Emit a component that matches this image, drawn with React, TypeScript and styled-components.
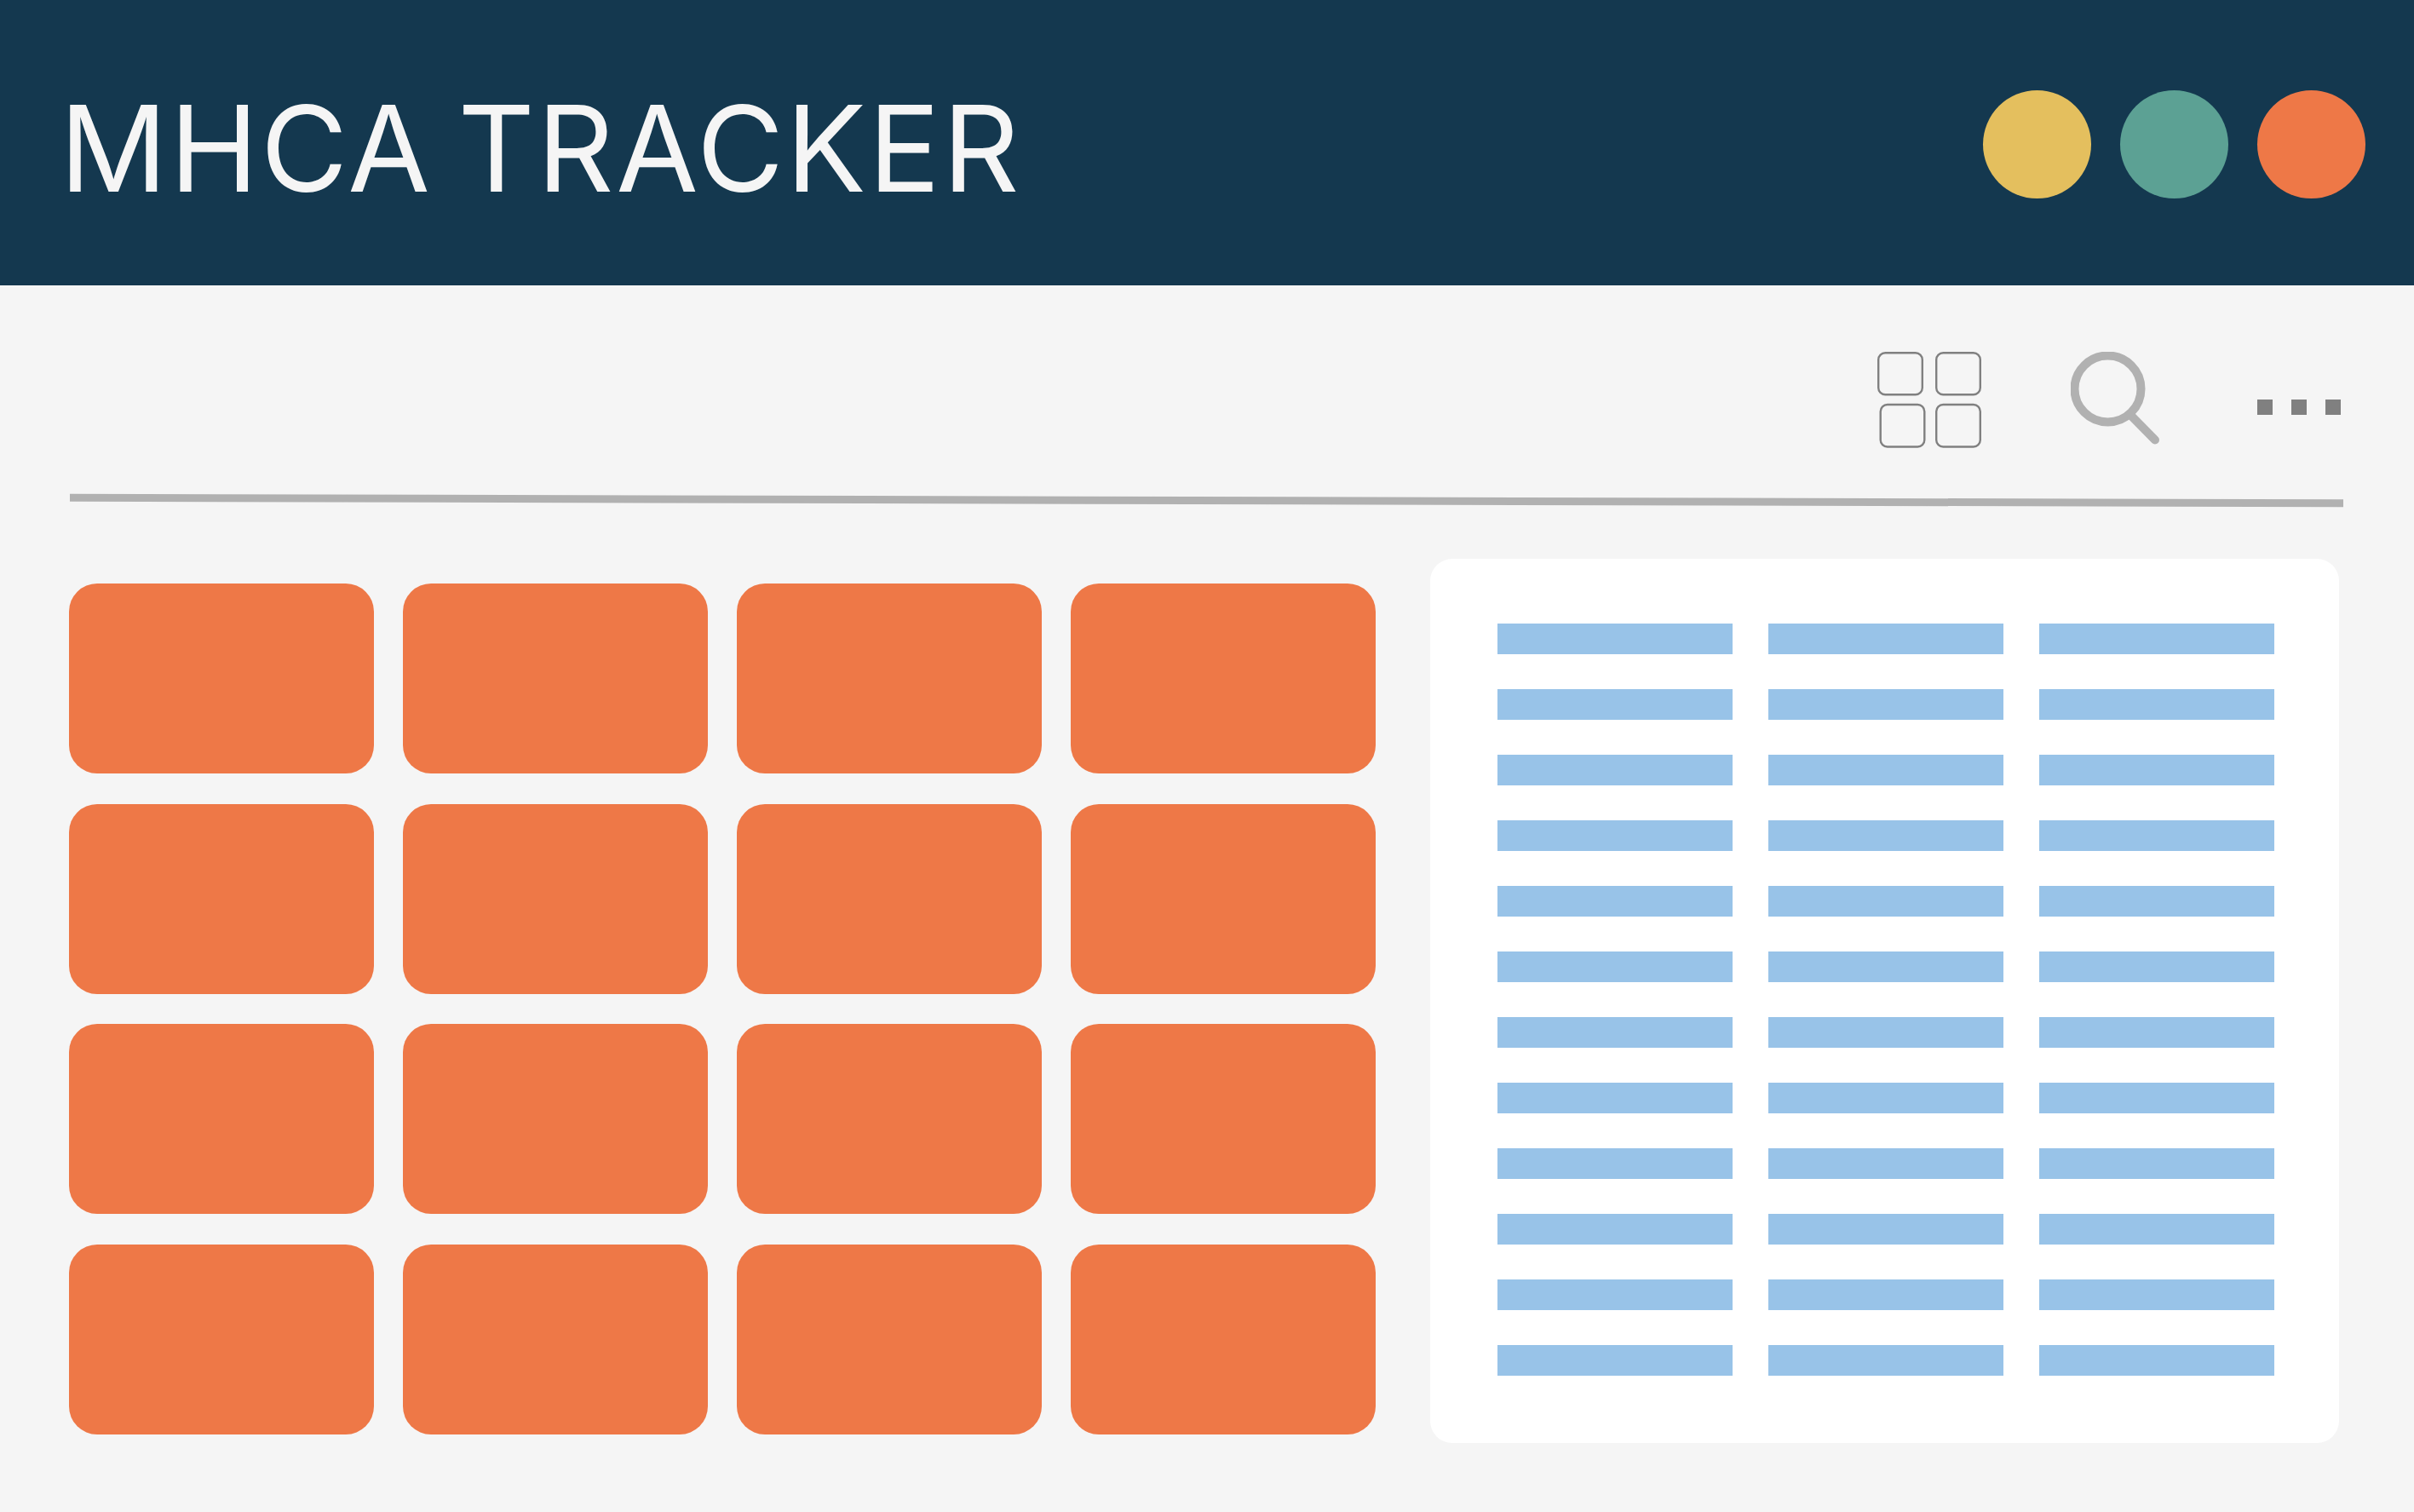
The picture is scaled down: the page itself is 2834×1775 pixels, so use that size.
import React from 'react';
import styled, { createGlobalStyle } from 'styled-components';

const theme = {
  navy: '#14384f',
  page: '#f5f5f5',
  orange: '#ee7847',
  yellow: '#e4bf5e',
  teal: '#5ca194',
  blue: '#98c3e8',
  rule: '#b1b1b1',
  icon: '#808080',
};

const GlobalStyle = createGlobalStyle`
  html, body {
    margin: 0;
    padding: 0;
    background: ${theme.page};
  }
`;

const Page = styled.div`
  width: 2834px;
  height: 1775px;
  display: flex;
  flex-direction: column;
  background: ${theme.page};
  overflow: hidden;
`;

const Header = styled.header`
  height: 334.5px;
  flex: none;
  display: flex;
  align-items: flex-start;
  justify-content: space-between;
  padding: 106px 57px 0 70px;
  box-sizing: border-box;
  background: ${theme.navy};
`;

const Title = styled.h1`
  margin: 5px 0 0;
  font-family: 'Inter', 'Liberation Sans', sans-serif;
  font-weight: 400;
  font-size: 140px;
  line-height: 127px;
  letter-spacing: 2.7px;
  word-spacing: -12px;
  color: ${theme.page};
  white-space: nowrap;
`;

const Lights = styled.div`
  display: flex;
  gap: 34px;
`;

const Light = styled.span<{ $color: string }>`
  width: 127px;
  height: 127px;
  border-radius: 50%;
  background: ${(p) => p.$color};
`;

const Toolbar = styled.div`
  display: flex;
  justify-content: flex-end;
  align-items: flex-start;
  padding: 78.5px 86px 0 0;
  height: 248.5px;
  box-sizing: border-box;
  flex: none;
`;

const IconGroup = styled.div`
  display: flex;
  gap: 105px;
`;

const Divider = styled.div`
  flex: none;
  height: 9px;
  margin: 0 83px 0 82px;
  background: ${theme.rule};
  transform: rotate(0.14deg);
`;

const Content = styled.main`
  display: flex;
  align-items: flex-start;
  padding: 64px 0 0 81px;
`;

const CardGrid = styled.div`
  display: grid;
  grid-template-columns: repeat(4, 357.5px);
  grid-auto-rows: 223px;
  column-gap: 34.5px;
  row-gap: 35.5px;
  padding-top: 29px;
`;

const Card = styled.div`
  background: ${theme.orange};
  border-radius: 33px;
`;

const Panel = styled.section`
  width: 1067px;
  height: 1038px;
  box-sizing: border-box;
  margin-left: 64.5px;
  padding: 76px 76px 0 79px;
  background: #fff;
  border-radius: 26px;
  display: grid;
  grid-template-columns: repeat(3, 276px);
  grid-auto-rows: 36px;
  column-gap: 42px;
  row-gap: 41px;
  align-content: start;
`;

const Bar = styled.div`
  background: ${theme.blue};
`;

const GridIcon = () => (
  <svg width="122" height="113" viewBox="0 0 122 113" fill="none" stroke={theme.icon} strokeWidth="2.4">
    <rect x="1.2" y="1.2" width="51.6" height="49" rx="8" />
    <rect x="69.2" y="1.2" width="51.6" height="49" rx="8" />
    <rect x="3.7" y="62" width="51.6" height="49.5" rx="8" />
    <rect x="69.2" y="62" width="51.6" height="49.5" rx="8" />
  </svg>
);

const SearchIcon = () => (
  <svg width="104" height="113" viewBox="0 0 104 113" fill="none" stroke={theme.rule}>
    <circle cx="43.5" cy="43.5" r="39" strokeWidth="10" />
    <path d="M70 74 L99 103.5" strokeWidth="10" strokeLinecap="round" />
  </svg>
);

const DotsIcon = () => (
  <svg width="108" height="113" viewBox="0 0 108 113" fill={theme.icon}>
    <rect x="10" y="56" width="18" height="18" />
    <rect x="50" y="56" width="18" height="18" />
    <rect x="90" y="56" width="18" height="18" />
  </svg>
);

const App: React.FC = () => {
  const cards = Array.from({ length: 16 });
  const bars = Array.from({ length: 36 });

  return (
    <Page>
      <GlobalStyle />
      <Header>
        <Title>MHCA TRACKER</Title>
        <Lights>
          <Light $color={theme.yellow} />
          <Light $color={theme.teal} />
          <Light $color={theme.orange} />
        </Lights>
      </Header>
      <Toolbar>
        <IconGroup>
          <GridIcon />
          <SearchIcon />
          <DotsIcon />
        </IconGroup>
      </Toolbar>
      <Divider />
      <Content>
        <CardGrid>
          {cards.map((_, i) => (
            <Card key={i} />
          ))}
        </CardGrid>
        <Panel>
          {bars.map((_, i) => (
            <Bar key={i} />
          ))}
        </Panel>
      </Content>
    </Page>
  );
};

export default App;
